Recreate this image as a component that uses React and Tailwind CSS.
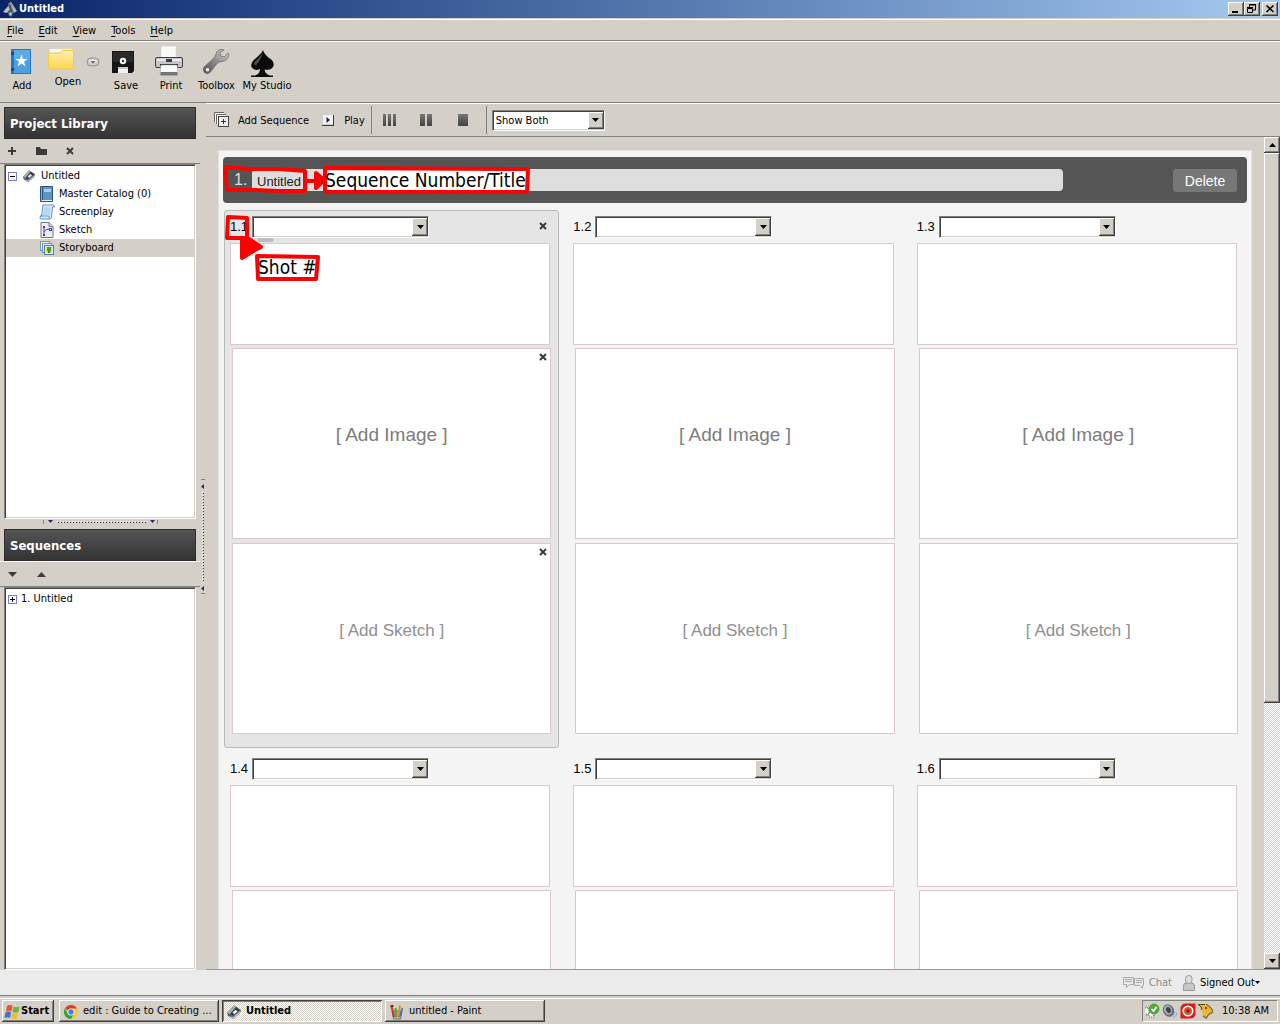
import React from "react";

const RAISED =
  "bg-[#d4d0c8] shadow-[inset_-1px_-1px_#404040,inset_1px_1px_#ffffff,inset_-2px_-2px_#808080]";
const CHECKER =
  "bg-[repeating-conic-gradient(#ffffff_0_25%,#d4d0c8_0_50%)] bg-[length:2px_2px]";

function AppIcon({ className }) {
  return (
    <svg viewBox="0 0 16 16" className={className} aria-hidden="true">
      <path d="M1 9 L8 1.500 L15 6 L14 9 L7 15 L2 12 Z" fill="#5d646b" />
      <path d="M1 9 L8 1.500 L10 2.500 L4 10 Z" fill="#a3acb3" />
      <path d="M4 10 L10.500 3 L14 6 L7 12 Z" fill="#3c4248" />
      <path d="M2 12 L7 15 L14 9 L14 7 L7 13 Z" fill="#b4bdc3" />
      <path d="M6.500 8.500 L9.500 5.800 L11.500 7.400 L8.400 10.200 Z" fill="#e8ecee" />
    </svg>
  );
}

function TitleIcon() {
  return (
    <svg viewBox="0 0 16 16" className="size-4" aria-hidden="true">
      <path d="M6 3 L9 0.500 L13 9 L11 12 L8 12 Z" fill="#8b9299" />
      <path d="M1 11 L7 4 L9 7 L5 12 Z" fill="#b9c3c6" />
      <path d="M9 1 L15 10 L12 12 Z" fill="#aab6ba" />
      <path d="M6 4 L8 3 L11 11 L9 12 Z" fill="#4b525a" />
      <path d="M6 11 L11 11 L10 15.500 L7 15 Z" fill="#6f7d84" />
      <path d="M7.500 12 h2 v2 h-2z" fill="#c9d4d6" />
    </svg>
  );
}

function Menu({ first, rest }) {
  return (
    <button type="button" className="leading-4">
      <span className="underline underline-offset-2">{first}</span>
      {rest}
    </button>
  );
}

function Tool({ label, width, children }) {
  return (
    <button type="button" className={`flex shrink-0 flex-col items-center ${width}`}>
      {children}
      <span className="whitespace-nowrap leading-[18px]">{label}</span>
    </button>
  );
}

function Toolbar() {
  return (
    <div className="flex h-[61px] items-start border-b border-[#808080] pt-[3px]">
      <Tool label="Add" width="w-11">
        <svg viewBox="0 0 20 32" className="mr-0.5 h-8 w-5" aria-hidden="true">
          <rect x="0" y="4" width="20" height="25" fill="#2079c9" />
          <rect x="3" y="5" width="16" height="23" fill="#4d9fe0" />
          <rect x="3" y="5" width="16" height="10" fill="#5cabe6" />
          <rect x="0" y="7" width="3" height="3" fill="#1b4a78" />
          <rect x="0" y="23" width="3" height="3" fill="#1b4a78" />
          <path d="M10.500 9.500 L12 14 L16.500 14 L13 16.800 L14.500 21.500 L10.500 18.600 L6.500 21.500 L8 16.800 L4.500 14 L9 14 Z" fill="#fff" />
        </svg>
      </Tool>
      <Tool label="Open" width="w-12">
        <svg viewBox="0 0 28 28" className="mr-3.5 h-7 w-7" aria-hidden="true">
          <defs>
            <linearGradient id="fold" x1="0" y1="0" x2="0" y2="1">
              <stop offset="0" stopColor="#fdeeb0" />
              <stop offset="1" stopColor="#fbd64f" />
            </linearGradient>
          </defs>
          <path d="M2.500 4 h23 v6 h-23z" fill="#f7f7f7" stroke="#ddd" strokeWidth="0.500" />
          <path d="M1.500 22 V9 q0-1 1-1 h10.500 l3-2.500 h9.500 q1 0 1 1 V22 q0 2-2 2 h-21 q-2 0-2-2z" fill="url(#fold)" stroke="#f5c93a" />
        </svg>
      </Tool>
      <button type="button" aria-label="Open menu" className="-ml-1.5 mt-3 w-[14px]">
        <svg viewBox="0 0 14 10" className="h-2.5 w-[14px]" aria-hidden="true">
          <rect x="1" y="1" width="12" height="8" rx="4" fill="#c9c9c9" stroke="#929292" />
          <ellipse cx="7" cy="4" rx="4" ry="1.500" fill="#eee" />
          <path d="M4.500 4 h5 l-2.500 2.500z" fill="#666" />
        </svg>
      </button>
      <Tool label="Save" width="ml-1 w-[44px]">
        <svg viewBox="0 0 22 32" className="mr-1.5 h-8 w-[22px]" aria-hidden="true">
          <path d="M0 6 h22 v20 l-2 2 h-20z" fill="#161616" />
          <path d="M1 7 h20 v10 h-20z" fill="#2a2a2a" />
          <circle cx="11" cy="16" r="3.200" fill="#fff" />
          <circle cx="11" cy="16" r="1.200" fill="#333" />
          <rect x="6" y="22" width="10" height="6" fill="#f2f2f2" />
          <rect x="6" y="22" width="10" height="2" fill="#c9c9c9" />
        </svg>
      </Tool>
      <Tool label="Print" width="w-[46px]">
        <svg viewBox="0 0 30 32" className="mr-1 h-8 w-[30px]" aria-hidden="true">
          <rect x="7" y="1" width="15" height="12" fill="#f8f8f8" stroke="#ccc" strokeWidth="0.500" />
          <rect x="1.500" y="12.500" width="27" height="10" rx="1.500" fill="#c4c6ca" stroke="#3d3f44" />
          <rect x="3" y="14" width="24" height="2" fill="#e8eaec" />
          <rect x="12" y="14" width="6" height="3" fill="#3a3c40" />
          <rect x="6" y="19" width="18" height="2" fill="#303236" />
          <path d="M7 20 h16 l1 9 h-18z" fill="#fafafa" stroke="#999" strokeWidth="0.500" />
          <rect x="6.500" y="27" width="17" height="3.500" fill="#72767a" />
        </svg>
      </Tool>
      <Tool label="Toolbox" width="w-[45px]">
        <svg viewBox="0 0 28 32" className="mr-0.5 h-8 w-7" aria-hidden="true">
          <defs>
            <linearGradient id="wr" x1="1" y1="0" x2="0" y2="1">
              <stop offset="0" stopColor="#d5d5d5" />
              <stop offset="0.500" stopColor="#8d8d8d" />
              <stop offset="1" stopColor="#4e4e4e" />
            </linearGradient>
          </defs>
          <path d="M20 4.500 Q15 4.500 14 9 Q13.500 12 11 14 L2.500 21.500 Q0 24.500 2.500 27.500 Q5.500 30 8.500 27 L15 18.500 Q17 16.500 20 16.500 Q26 15.500 27 9.500 L26 8 L22.500 12 L18.500 11 L18 7.500 L22 5 Z" fill="url(#wr)" stroke="#606060" strokeWidth="0.700" />
          <circle cx="5.500" cy="24.800" r="1.800" fill="#eee" />
        </svg>
      </Tool>
      <Tool label="My Studio" width="w-14">
        <svg viewBox="0 0 28 32" className="mr-2.5 h-8 w-7" aria-hidden="true">
          <path d="M15 5 Q14 8 8 13 Q2 18 3.500 22 Q6 26.500 12 24 Q12 29 7 30.500 H3 V32 H25 V30.500 H22 Q17 29 16.500 24.500 Q23 26 25.500 21 Q26.500 16 21 13 Q16 9 15 5Z" fill="#0b0b0b" />
          <path d="M15 8 Q11 13 6.500 17 Q5.500 20 8 20.500 Q12 16 15 8Z" fill="#4d4d4d" />
        </svg>
      </Tool>
    </div>
  );
}

function PanelHeader({ children }) {
  return (
    <h2 className="mx-1 flex h-8 shrink-0 items-center border border-[#2e2e2e] bg-linear-to-b from-[#555] to-[#333] px-[5px] pt-px text-[13px] font-bold text-white">
      {children}
    </h2>
  );
}

function Expander({ open }) {
  return (
    <button
      type="button"
      aria-label={open ? "Collapse" : "Expand"}
      className="grid size-[9px] shrink-0 place-items-center border border-[#7b7bd0] bg-white"
    >
      <svg viewBox="0 0 5 5" className="size-[5px]" aria-hidden="true">
        <path d={open ? "M0 2h5v1H0z" : "M0 2h5v1H0z M2 0h1v5H2z"} fill="#000" />
      </svg>
    </button>
  );
}

const TREE_ICONS = {
  catalog: (
    <svg viewBox="0 0 16 16" className="size-4" aria-hidden="true">
      <rect x="1" y="0" width="13" height="16" rx="1" fill="#2c5580" />
      <rect x="4" y="1" width="9" height="13" fill="#5f94c4" />
      <rect x="5" y="3" width="7" height="3" fill="#a9cdea" />
      <rect x="2" y="1" width="1" height="14" fill="#86b1d8" />
      <rect x="3" y="14" width="10" height="1" fill="#e4eef6" />
    </svg>
  ),
  screenplay: (
    <svg viewBox="0 0 16 16" className="size-4" aria-hidden="true">
      <path d="M4 1 h10 q1.500 0 1.500 2 h-2 l-1 10 q0 2-2 2 h-9 q-1-1 0-3 h1z" fill="#dcecfb" stroke="#5a94d0" />
      <path d="M5 3 h7 l-1 8 h-7z" fill="#b9d8f5" />
      <path d="M1 12 h9 q0 2 1 3" fill="none" stroke="#5a94d0" />
    </svg>
  ),
  sketch: (
    <svg viewBox="0 0 16 16" className="size-4" aria-hidden="true">
      <path d="M2 0.500 h8 l4 4 v11 h-12z" fill="#eeeef2" stroke="#77777d" />
      <path d="M10 0.500 v4 h4" fill="#cfcfd6" stroke="#77777d" />
      <path d="M5 5 v8 M5 10 q1-3 5-3" fill="none" stroke="#4a48c0" />
      <path d="M4 4h2v2H4z M4 12h2v2H4z M10 6h3v3h-3z" fill="#3d3bbd" />
      <rect x="11" y="7" width="1" height="1" fill="#fff" />
    </svg>
  ),
  storyboard: (
    <svg viewBox="0 0 16 16" className="size-4" aria-hidden="true">
      <rect x="1.500" y="1.500" width="9" height="9" fill="#e8f1f8" stroke="#6f97b8" />
      <rect x="3.500" y="3.500" width="9" height="9" fill="#e8f1f8" stroke="#6f97b8" />
      <rect x="5.500" y="5.500" width="9" height="9" fill="#d7ebf8" stroke="#4f82ad" />
      <rect x="7" y="7" width="6" height="6" fill="#e9de4a" />
      <rect x="8" y="7" width="4" height="4" fill="#3aa13a" />
      <rect x="9" y="11" width="2" height="2" fill="#8a5a2a" />
    </svg>
  ),
};

function TreeRow({ icon, label, selected }) {
  return (
    <li
      className={
        selected
          ? "flex h-[18px] items-center gap-1 bg-[#d4d0c8] pl-[33px]"
          : "flex h-[18px] items-center gap-1 pl-[33px]"
      }
    >
      {TREE_ICONS[icon]}
      <a href="#" className="whitespace-nowrap">{label}</a>
    </li>
  );
}

const SUNKEN =
  "mx-1 border border-t-[#808080] border-l-[#808080] border-r-white border-b-white bg-white shadow-[inset_1px_1px_#404040,inset_-1px_-1px_#d4d0c8]";

function Sidebar() {
  return (
    <aside className="flex w-[200px] shrink-0 flex-col pt-1">
      <PanelHeader>Project Library</PanelHeader>
      <div className="flex h-[25px] shrink-0 items-center gap-[18px] border-b border-[#808080] pl-[7px]">
        <button type="button" aria-label="Add item">
          <svg viewBox="0 0 10 10" className="size-2.5" aria-hidden="true">
            <path d="M4 1h2v3h3v2H6v3H4V6H1V4h3z" fill="#3c3c3c" />
          </svg>
        </button>
        <button type="button" aria-label="New folder">
          <svg viewBox="0 0 12 10" className="h-2.5 w-3" aria-hidden="true">
            <path d="M1 1h4l1 2h6v6H1z" fill="#3c3c3c" />
          </svg>
        </button>
        <button type="button" aria-label="Delete item">
          <svg viewBox="0 0 10 10" className="size-2.5" aria-hidden="true">
            <path d="M2 2l6 6M8 2l-6 6" stroke="#3c3c3c" strokeWidth="2" />
          </svg>
        </button>
      </div>
      <ul className={`min-h-0 flex-[355_1_0%] overflow-hidden px-px pt-0.5 ${SUNKEN}`}>
        <li className="flex h-[18px] items-center pl-0.5">
          <Expander open />
          <AppIcon className="ml-[5px] size-[14px]" />
          <a href="#" className="ml-[5px]">Untitled</a>
        </li>
        <TreeRow icon="catalog" label="Master Catalog (0)" />
        <TreeRow icon="screenplay" label="Screenplay" />
        <TreeRow icon="sketch" label="Sketch" />
        <TreeRow icon="storyboard" label="Storyboard" selected />
      </ul>
      <div className="flex h-2.5 shrink-0 items-start justify-center pl-0.5">
        <svg viewBox="0 0 116 6" className="mt-px h-1.5 w-[116px]" aria-hidden="true">
          <path d="M0.500 0v4M114.500 0v4" stroke="#808080" />
          <path d="M5 0h5L7.500 3zM107 0h5L109.500 3z" fill="#2b2b6b" />
          <path d="M14 1.500H103" stroke="#fff" strokeDasharray="1 2" />
          <path d="M15 2.500H103" stroke="#2b2b6b" strokeDasharray="1 2" />
        </svg>
      </div>
      <PanelHeader>Sequences</PanelHeader>
      <div className="flex h-[26px] shrink-0 items-center gap-5 border-t border-b border-t-white border-b-[#808080] pl-2">
        <button type="button" aria-label="Move down">
          <svg viewBox="0 0 9 5" className="h-[5px] w-[9px]" aria-hidden="true">
            <path d="M0 0h9L4.500 5z" fill="#3c3c3c" />
          </svg>
        </button>
        <button type="button" aria-label="Move up">
          <svg viewBox="0 0 9 5" className="h-[5px] w-[9px]" aria-hidden="true">
            <path d="M0 5h9L4.500 0z" fill="#3c3c3c" />
          </svg>
        </button>
      </div>
      <ul className={`min-h-0 flex-[383_1_0%] px-px pt-0.5 ${SUNKEN}`}>
        <li className="flex h-[18px] items-center gap-1 pl-0.5">
          <Expander />
          <a href="#">1. Untitled</a>
        </li>
      </ul>
    </aside>
  );
}

function Splitter() {
  return (
    <div className="flex w-1.5 shrink-0 items-center">
      <svg viewBox="0 0 6 116" className="h-[116px] w-1.5" aria-hidden="true">
        <path d="M1 0.500h4M1 114.500h4" stroke="#808080" />
        <path d="M4 5v5L1 7.500zM4 107v5L1 109.500z" fill="#2b2b6b" />
        <path d="M2.500 13V103" stroke="#fff" strokeDasharray="1 2" />
        <path d="M3.500 14V103" stroke="#2b2b6b" strokeDasharray="1 2" />
      </svg>
    </div>
  );
}

function Dropdown({ label, value, className }) {
  return (
    <div className={`grid ${className}`}>
      <select
        aria-label={label}
        defaultValue={value}
        className="col-start-1 row-start-1 h-full w-full appearance-none border border-t-[#808080] border-l-[#808080] border-r-white border-b-white bg-white pt-px pl-[3px] leading-4 shadow-[inset_1px_1px_#404040,inset_-1px_-1px_#d4d0c8] outline-none"
      >
        {value ? <option>{value}</option> : null}
      </select>
      <span className={`pointer-events-none col-start-1 row-start-1 my-0.5 mr-px grid w-4 place-items-center justify-self-end ${RAISED}`}>
        <svg viewBox="0 0 7 4" className="h-1 w-[7px]" aria-hidden="true">
          <path d="M0 0h7L3.500 4z" fill="#000" />
        </svg>
      </span>
    </div>
  );
}

function Bars({ count, label, className }) {
  return (
    <button type="button" aria-label={label} className={`flex h-3 ${className}`}>
      {Array.from({ length: count }, (_, i) => (
        <span key={i} className="flex-1 bg-linear-to-b from-[#777] to-[#444]" />
      ))}
    </button>
  );
}

function SequenceToolbar() {
  return (
    <div className="flex h-[34px] shrink-0 items-center border-t border-b border-t-white border-b-[#808080] pl-2">
      <button type="button" className="flex items-center gap-2">
        <svg viewBox="0 0 16 16" className="size-4" aria-hidden="true">
          <path d="M0.500 10V0.500H10M2.500 12V2.500H12" fill="none" stroke="#666" />
          <path d="M1.500 10V1.500H10M3.500 12V3.500H12" fill="none" stroke="#fff" />
          <rect x="4.500" y="4.500" width="10" height="10" fill="#eee" stroke="#444" />
          <path d="M9 7h1v2h2v1h-2v2H9v-2H7V9h2z" fill="#333" />
        </svg>
        <span className="pt-0.5">Add Sequence</span>
      </button>
      <button type="button" className="ml-[13px] flex items-center gap-2.5">
        <svg viewBox="0 0 12 12" className="size-3" aria-hidden="true">
          <rect x="0.500" y="0.500" width="11" height="10" fill="#f4f4f4" stroke="#ccc" />
          <path d="M0 11.500h12M11.500 1v10" stroke="#3c3c3c" />
          <path d="M4.500 3v6L8 6z" fill="#222" />
        </svg>
        <span className="pt-0.5">Play</span>
      </button>
      <span className="ml-1.5 h-7 w-px bg-[#808080]" />
      <Bars count={3} label="Three columns" className="ml-[11px] w-[13px] gap-0.5" />
      <Bars count={2} label="Two columns" className="ml-6 w-3 gap-0.5" />
      <Bars count={1} label="One column" className="ml-[26px] w-2.5" />
      <span className="ml-[18px] h-7 w-px bg-[#808080]" />
      <Dropdown label="Display mode" value="Show Both" className="ml-[5px] h-[21px] w-[113px]" />
    </div>
  );
}

function Cross({ label }) {
  return (
    <button type="button" aria-label={label} className="grid size-2.5 place-items-center">
      <svg viewBox="0 0 8 8" className="size-2" aria-hidden="true">
        <path d="M1 1l6 6M7 1L1 7" stroke="#3a3a3a" strokeWidth="2" />
      </svg>
    </button>
  );
}

function Drop({ kind, shot, selected, className }) {
  return (
    <div className="relative mx-[7px] mt-[3px] h-[191px] border border-[#dcc8cc] bg-white nth-[n+4]:mt-1">
      <button type="button" className={`size-full pb-4 [font-family:'Liberation_Sans',Arial,sans-serif] ${className}`} aria-label={`${kind}, shot ${shot}`}>
        [ {kind} ]
      </button>
      {selected && (
        <div className="absolute top-[3px] right-0.5">
          <Cross label={`Remove, ${kind}`} />
        </div>
      )}
    </div>
  );
}

function Shot({ number, selected }) {
  return (
    <section
      className={
        selected
          ? "rounded-[3px] border border-[#b9b9b9] bg-[#e5e5e5] pb-[13px]"
          : "rounded-[3px] border border-transparent pb-[13px]"
      }
    >
      <div className="flex h-8 items-center pr-2.5 pl-[5px]">
        <h3 className="w-[22px] [font-family:'Liberation_Sans',Arial,sans-serif] text-[13px]">{number}</h3>
        <Dropdown label={`Shot ${number} type`} value="" className="h-[22px] w-[177px]" />
        {selected && (
          <span className="mb-0.5 ml-auto">
            <Cross label={`Remove shot ${number}`} />
          </span>
        )}
      </div>
      <textarea
        aria-label={`Shot ${number} description`}
        className="mr-2 ml-[5px] block h-[102px] w-[calc(100%-13px)] resize-none border border-[#dcc8cc] bg-white p-1 outline-none"
      />
      <Drop kind="Add Image" shot={number} selected={selected} className="text-[19px] text-[#7c7c7c]" />
      <Drop kind="Add Sketch" shot={number} selected={selected} className="text-[17px] text-[#8f8f8f]" />
    </section>
  );
}

function Annotations() {
  return (
    <div className="pointer-events-none absolute inset-0">
      <svg width="330" height="140" viewBox="0 0 330 140" className="absolute top-0 left-0" fill="none" stroke="#fe0000" strokeWidth="4" strokeLinejoin="round" strokeLinecap="round" aria-hidden="true">
        <path d="M40 89 H53" stroke="#bdbdbd" />
        <path d="M7 16 L30 18 L60 18 L86 20 L86 40 L60 40 L34 39 L8 39 L6 17" />
        <path d="M88 30 H96" strokeWidth="4" />
        <path d="M97 22 L105 29 L97 37 Z" fill="#fe0000" />
        <path d="M9 66 L28 67 L28 87 L8 87 Z" />
        <path d="M23 87 L30 88 L42 96 L36 99 L23 107 Z" fill="#fe0000" />
      </svg>
      <svg viewBox="0 0 208 30" className="absolute top-[15px] left-[104px] h-[30px] w-[208px]" fill="none" stroke="#fe0000" strokeWidth="4" strokeLinejoin="round" aria-hidden="true">
        <path d="M2 2 L205 3 L204 26 L2 26 Z" fill="#fff" />
      </svg>
      <p className="absolute top-[17px] left-[106px] text-[19px] leading-6 whitespace-nowrap text-black">Sequence Number/Title</p>
      <svg viewBox="0 0 66 30" className="absolute top-[103px] left-[36px] h-[30px] w-[66px]" fill="none" stroke="#fe0000" strokeWidth="4" strokeLinejoin="round" aria-hidden="true">
        <path d="M2 2 L63 3 L61 25 L3 25 Z" fill="#fff" />
      </svg>
      <p className="absolute top-[104px] left-[39px] text-[19px] leading-6 whitespace-nowrap text-black">Shot #</p>
    </div>
  );
}

function Board() {
  return (
    <div className="min-h-0 min-w-0 flex-1 overflow-hidden pt-[13px] pr-3 pl-3">
      <div className="relative border border-[#e2e2e2] bg-[#f4f4f4] px-1 pt-1.5">
        <div className="flex h-[46px] items-center rounded bg-[#555] pr-2.5 pl-[11px]">
          <label htmlFor="sequence-title" className="w-[18px] [font-family:'Liberation_Sans',Arial,sans-serif] text-base text-[#ddd]">1.</label>
          <input
            id="sequence-title"
            defaultValue="Untitled"
            className="h-[22px] w-0 max-w-[811px] flex-1 rounded bg-[#dedede] px-[5px] pt-0.5 [font-family:'Liberation_Sans',Arial,sans-serif] text-[13px] text-[#222] outline-none"
          />
          <button type="button" className="ml-auto h-[23px] w-16 rounded-[3px] bg-[#777] pt-0.5 [font-family:'Liberation_Sans',Arial,sans-serif] text-sm text-white">
            Delete
          </button>
        </div>
        <div className="mt-[7px] grid grid-cols-3 gap-x-2 gap-y-1 px-px">
          {["1.1", "1.2", "1.3", "1.4", "1.5", "1.6"].map((n) => (
            <Shot key={n} number={n} selected={n === "1.1"} />
          ))}
        </div>
        <Annotations />
      </div>
    </div>
  );
}

function Scrollbar() {
  return (
    <div className={`flex w-4 shrink-0 flex-col ${CHECKER}`}>
      <button type="button" aria-label="Scroll up" className={`grid h-4 shrink-0 place-items-center ${RAISED}`}>
        <svg viewBox="0 0 7 4" className="h-1 w-[7px]" aria-hidden="true"><path d="M0 4h7L3.500 0z" /></svg>
      </button>
      <div className={`flex-[550_1_0%] ${RAISED}`} />
      <div className="flex-[250_1_0%]" />
      <button type="button" aria-label="Scroll down" className={`grid h-4 shrink-0 place-items-center ${RAISED}`}>
        <svg viewBox="0 0 7 4" className="h-1 w-[7px]" aria-hidden="true"><path d="M0 0h7L3.500 4z" /></svg>
      </button>
    </div>
  );
}

function StatusBar() {
  return (
    <div className="flex h-[25px] shrink-0 items-center justify-end bg-[#ebebeb] pr-5">
      <button type="button" className="flex items-center gap-1 text-[#8a8a8a]">
        <svg viewBox="0 0 22 14" className="h-3.5 w-[22px]" fill="#ebebeb" stroke="#a8a8a8" aria-hidden="true">
          <path d="M0.500 1.500h10v7h-4l-3 3v-3h-3z" />
          <path d="M2 3.500h7M2 5.500h7" />
          <path d="M12.500 2.500h8v7h-1v3l-3-3h-5v-7z" />
          <path d="M13 4.500h6M13 6.500h6" />
        </svg>
        <span className="pt-0.5">Chat</span>
      </button>
      <button type="button" className="ml-2.5 flex items-center gap-1">
        <svg viewBox="0 0 14 16" className="h-4 w-3.5" fill="#c6c6c6" stroke="#999" aria-hidden="true">
          <path d="M1.500 15.500V11q0-3 3-3h5q3 0 3 3v4.500z" />
          <rect x="3.500" y="0.500" width="6.500" height="8" rx="3" fill="#dcdcdc" />
        </svg>
        <span className="pt-0.5">Signed Out</span>
        <svg viewBox="0 0 5 3" className="-ml-1 h-[3px] w-[5px]" aria-hidden="true"><path d="M0 0h5L2.500 3z" /></svg>
      </button>
    </div>
  );
}

function Taskbar() {
  const task = "flex h-[22px] w-40 min-w-0 items-center gap-1 px-1 pt-px text-left";
  return (
    <div className="flex h-[29px] shrink-0 items-start gap-[3px] border-t border-[#808080] bg-[#d4d0c8] px-0.5 pt-1 shadow-[inset_0_2px_#d4d0c8,inset_0_3px_#fff]">
      <button type="button" className={`mr-0.5 flex h-[22px] w-[52px] shrink-0 items-center gap-px pt-px pl-0.5 font-bold ${RAISED}`}>
        <svg viewBox="0 0 16 16" className="size-4 shrink-0" aria-hidden="true">
          <path d="M3 2q3-2 5.500 0l-1 5.500q-2.500-1.500-5.500 0z" fill="#e5532a" />
          <path d="M9.500 2.500q3 1.500 6 0l-1 5.500q-3 1.500-6 0z" fill="#6db33b" />
          <path d="M1.500 8.500q3-2 5.500 0l-1 5.500q-2.500-1.500-5.500 0z" fill="#3d6fd1" />
          <path d="M8 9q3 1.500 6 0l-1 5.500q-3 1.500-6 0z" fill="#f2bd2d" />
        </svg>
        Start
      </button>
      <button type="button" className={`${task} ${RAISED}`}>
        <svg viewBox="0 0 16 16" className="size-4 shrink-0" aria-hidden="true">
          <circle cx="8" cy="8" r="7" fill="#f6cd2f" />
          <path d="M8 8L1.900 4.500A7 7 0 0 1 14.100 4.600L8 4.600z" fill="#dc3a2b" />
          <path d="M8 8L11 9.700L8 15A7 7 0 0 1 1.900 4.500L5 9.700z" fill="#35a04a" />
          <circle cx="8" cy="8" r="3.500" fill="#fff" />
          <circle cx="8" cy="8" r="2.700" fill="#3f7fe0" />
        </svg>
        <span className="whitespace-nowrap">edit : Guide to Creating ...</span>
      </button>
      <button type="button" className={`${task} font-bold shadow-[inset_1px_1px_#404040,inset_-1px_-1px_#fff,inset_2px_2px_#808080] ${CHECKER}`}>
        <AppIcon className="size-4 shrink-0" />
        Untitled
      </button>
      <button type="button" className={`${task} ${RAISED}`}>
        <svg viewBox="0 0 16 16" className="size-4 shrink-0" aria-hidden="true">
          <path d="M3 7h10l-1.500 8h-7z" fill="#aab4bc" stroke="#6a747c" />
          <path d="M5 13L2.500 2" stroke="#c23a1e" strokeWidth="2" />
          <path d="M7 13L6.500 4" stroke="#4f9d46" strokeWidth="2" />
          <path d="M9 13L11 1.500" stroke="#e2892a" strokeWidth="2" />
          <path d="M10.500 13L13.500 4" stroke="#3f6fb5" strokeWidth="1.500" />
          <path d="M1.500 1h3v2h-3z" fill="#8e2516" />
        </svg>
        untitled - Paint
      </button>
      <div className="ml-auto flex h-[22px] shrink-0 items-center gap-0.5 border border-t-[#808080] border-l-[#808080] border-r-white border-b-white pr-2 pl-px">
        <svg viewBox="0 0 16 16" className="size-4" aria-hidden="true">
          <path d="M2 3l4 4M2 13l4-4M10 13l-2-3M1 5h4v6H1M5 9h5v5H5z" fill="#f2f2f2" stroke="#777" strokeDasharray="1 1" />
          <circle cx="10" cy="6" r="5" fill="#4fae3c" stroke="#2b7d20" strokeWidth="0.500" />
          <path d="M7.500 6l2 2 3-4" fill="none" stroke="#fff" strokeWidth="1.500" />
        </svg>
        <svg viewBox="0 0 16 16" className="size-4" aria-hidden="true">
          <ellipse cx="6.500" cy="7.500" rx="5.500" ry="6.500" transform="rotate(-25 6.500 7.500)" fill="#6b6f75" />
          <ellipse cx="6" cy="7" rx="4" ry="5" transform="rotate(-25 6 7)" fill="#a4a8ad" />
          <ellipse cx="6.500" cy="7" rx="2.200" ry="3" transform="rotate(-25 6.500 7)" fill="#3c4046" />
          <path d="M11 15q4-1.500 4-6M9.500 13.500q3-1 3.500-5" fill="none" stroke="#8fa5dd" />
        </svg>
        <svg viewBox="0 0 16 16" className="size-4" aria-hidden="true">
          <path d="M6 0.500h9.500V10q0 5.500-5.500 5.500H0.500V6Q0.500 0.500 6 0.500z" fill="#d81e12" />
          <circle cx="8" cy="8" r="5.600" fill="#fff" />
          <circle cx="8" cy="8" r="4" fill="#e0512f" />
          <circle cx="8" cy="8" r="1.600" fill="#6d0d06" />
        </svg>
        <svg viewBox="0 0 16 16" className="size-4" aria-hidden="true">
          <path d="M0 1h8l4 3 3 3v2l-5 1-3 4-2-1-1-5z" fill="#eeb42f" />
          <path d="M0 1.500h7M1 2l3 3-1 2M8 1l4 3 3 4" fill="none" stroke="#5b430f" />
          <path d="M5 13l3 2 3-4 4-2" fill="none" stroke="#8a6a1c" strokeWidth="1.500" />
          <circle cx="8" cy="5" r="1" fill="#4b3608" />
        </svg>
        <time className="ml-1.5 whitespace-nowrap">10:38 AM</time>
      </div>
    </div>
  );
}

function WindowButton({ label, children }) {
  return (
    <button type="button" aria-label={label} className={`h-[14px] w-4 ${RAISED}`}>
      <svg viewBox="0 0 16 14" className="h-[14px] w-4" fill="none" stroke="#000" aria-hidden="true">
        {children}
      </svg>
    </button>
  );
}

export default function App() {
  return (
    <div className="flex h-screen flex-col overflow-hidden bg-[#d4d0c8] [font-family:'DejaVu_Sans_Condensed','DejaVu_Sans',sans-serif] text-[11px] text-black">
      <header className="flex h-[18px] shrink-0 items-center gap-px bg-linear-to-r from-[#0a246a] to-[#a6caf0] pr-0.5 pl-0.5">
        <TitleIcon />
        <h1 className="text-[11px] font-bold text-white">Untitled</h1>
        <div className="ml-auto flex">
          <WindowButton label="Minimize"><path d="M4 10h6" strokeWidth="2" /></WindowButton>
          <WindowButton label="Restore">
            <path d="M5.500 5V3H11.500V8H9M3.500 6.500h5v4h-5z" />
            <path d="M5 2.500h7M3 5.500h6" />
          </WindowButton>
          <span className="w-0.5" />
          <WindowButton label="Close"><path d="M4.500 3.500l7 6.500M11.500 3.500l-7 6.500" strokeWidth="1.600" /></WindowButton>
        </div>
      </header>
      <nav className="mt-px flex h-[22px] shrink-0 items-center gap-[15px] border-t border-b border-t-white border-b-[#808080] pt-0.5 pl-[7px]">
        <Menu first="F" rest="ile" />
        <Menu first="E" rest="dit" />
        <Menu first="V" rest="iew" />
        <Menu first="T" rest="ools" />
        <Menu first="H" rest="elp" />
      </nav>
      <div className="shrink-0 border-t border-white">
        <Toolbar />
      </div>
      <div className="flex min-h-0 flex-1">
        <Sidebar />
        <Splitter />
        <main className="flex min-w-0 flex-1 flex-col border-b border-[#999]">
          <SequenceToolbar />
          <div className="flex min-h-0 flex-1">
            <Board />
            <Scrollbar />
          </div>
        </main>
      </div>
      <StatusBar />
      <Taskbar />
    </div>
  );
}
